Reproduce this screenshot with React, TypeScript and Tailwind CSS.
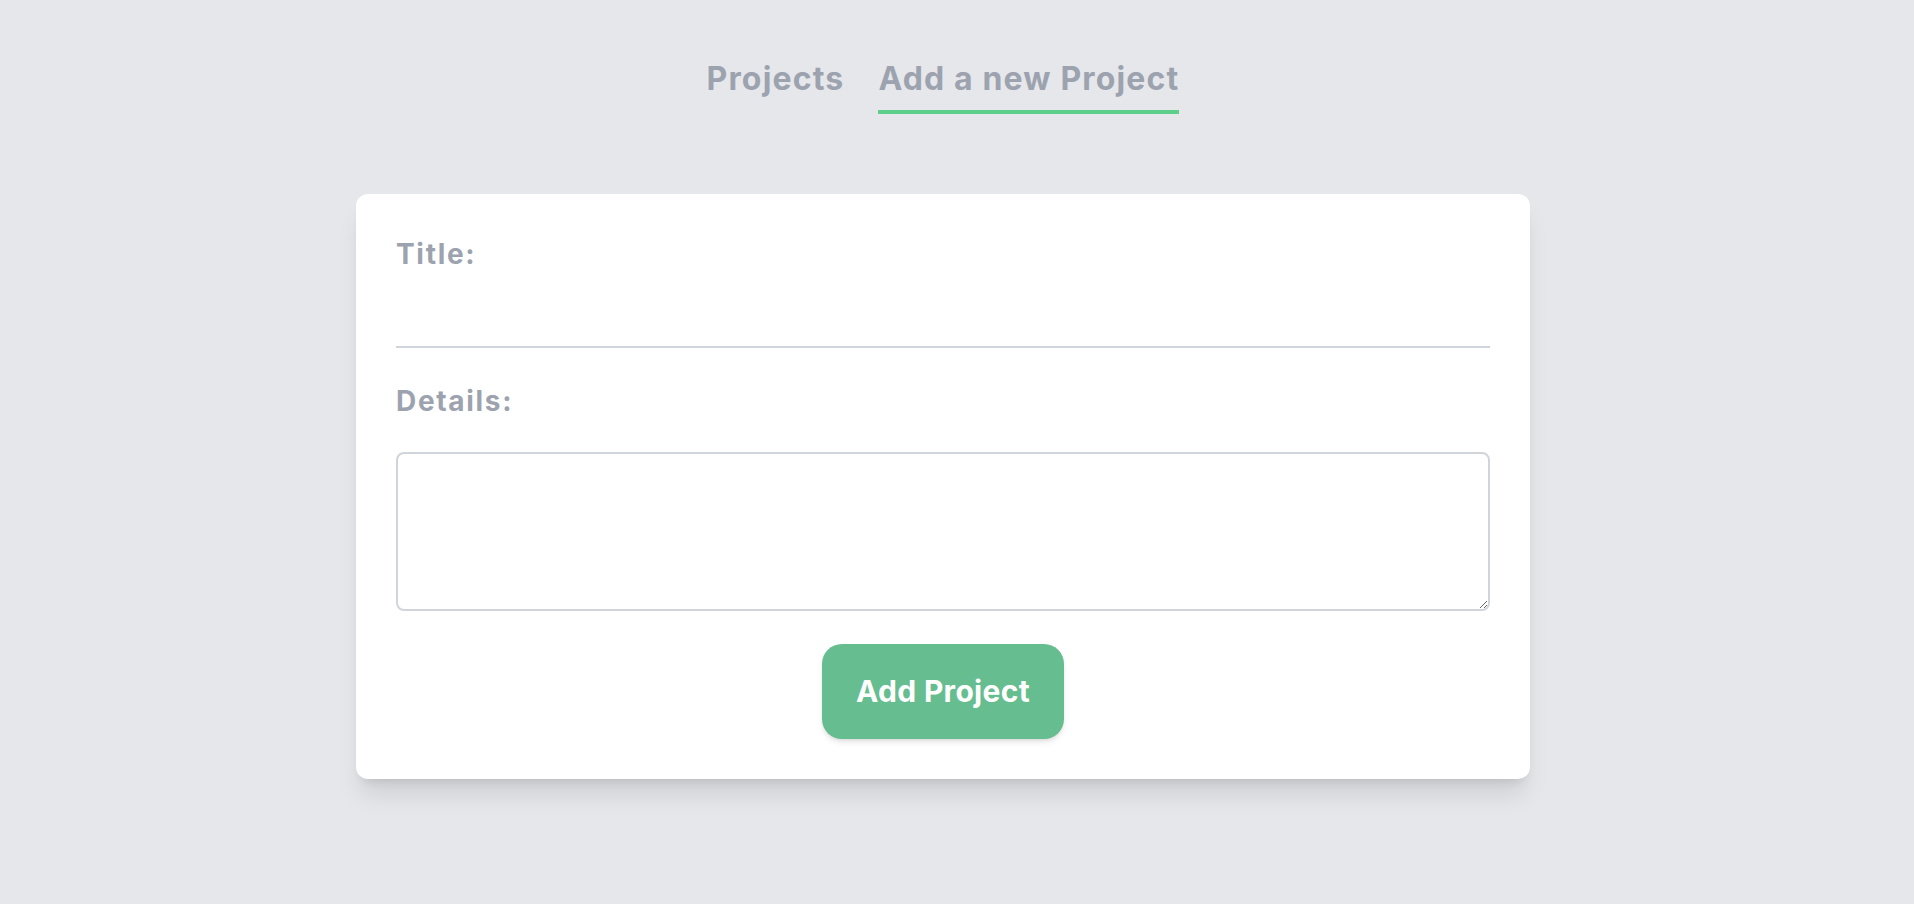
import React, { useState } from 'react';

const App: React.FC = () => {
    const [title, setTitle] = useState('');
    const [details, setDetails] = useState('');

    return (
        <div className="min-h-screen w-full bg-[#e5e7eb] font-['Inter',sans-serif] flex flex-col items-center pr-[28px] pt-[61px]">
            {/* Top tabs */}
            <nav className="flex justify-center gap-[34px]">
                <a className="text-[32px] leading-[36px] font-bold tracking-[0.036em] text-[#9ca3af] pb-[13px] border-b-4 border-transparent cursor-pointer">
                    Projects
                </a>
                <a className="text-[32px] leading-[36px] font-bold tracking-[0.036em] text-[#9ca3af] pb-[13px] border-b-4 border-[#5ccf8a] cursor-pointer">
                    Add a new Project
                </a>
            </nav>

            {/* Form card */}
            <form
                onSubmit={(e) => e.preventDefault()}
                className="mt-20 w-[1174px] bg-white rounded-xl shadow-xl p-10 flex flex-col"
            >
                <label className="text-[28px] leading-[40px] font-bold tracking-[0.06em] text-[#9ca3af]">Title:</label>
                <input
                    value={title}
                    onChange={(e) => setTitle(e.target.value)}
                    className="block w-full h-[74px] border-b-2 border-[#d1d5db] outline-none text-2xl text-gray-700"
                />

                <label className="mt-[33px] text-[28px] leading-[40px] font-bold tracking-[0.06em] text-[#9ca3af]">Details:</label>
                <textarea
                    value={details}
                    onChange={(e) => setDetails(e.target.value)}
                    className="mt-[31px] block w-full h-[159px] border-2 border-[#d1d5db] rounded-lg outline-none p-3 text-xl text-gray-700"
                />

                <button
                    type="submit"
                    className="mt-[33px] mx-auto w-[242px] h-[95px] rounded-[20px] bg-[#66bd8f] text-white text-[30px] font-bold tracking-[0.01em] shadow-md"
                >
                    Add Project
                </button>
            </form>
        </div>
    );
};

export default App;
